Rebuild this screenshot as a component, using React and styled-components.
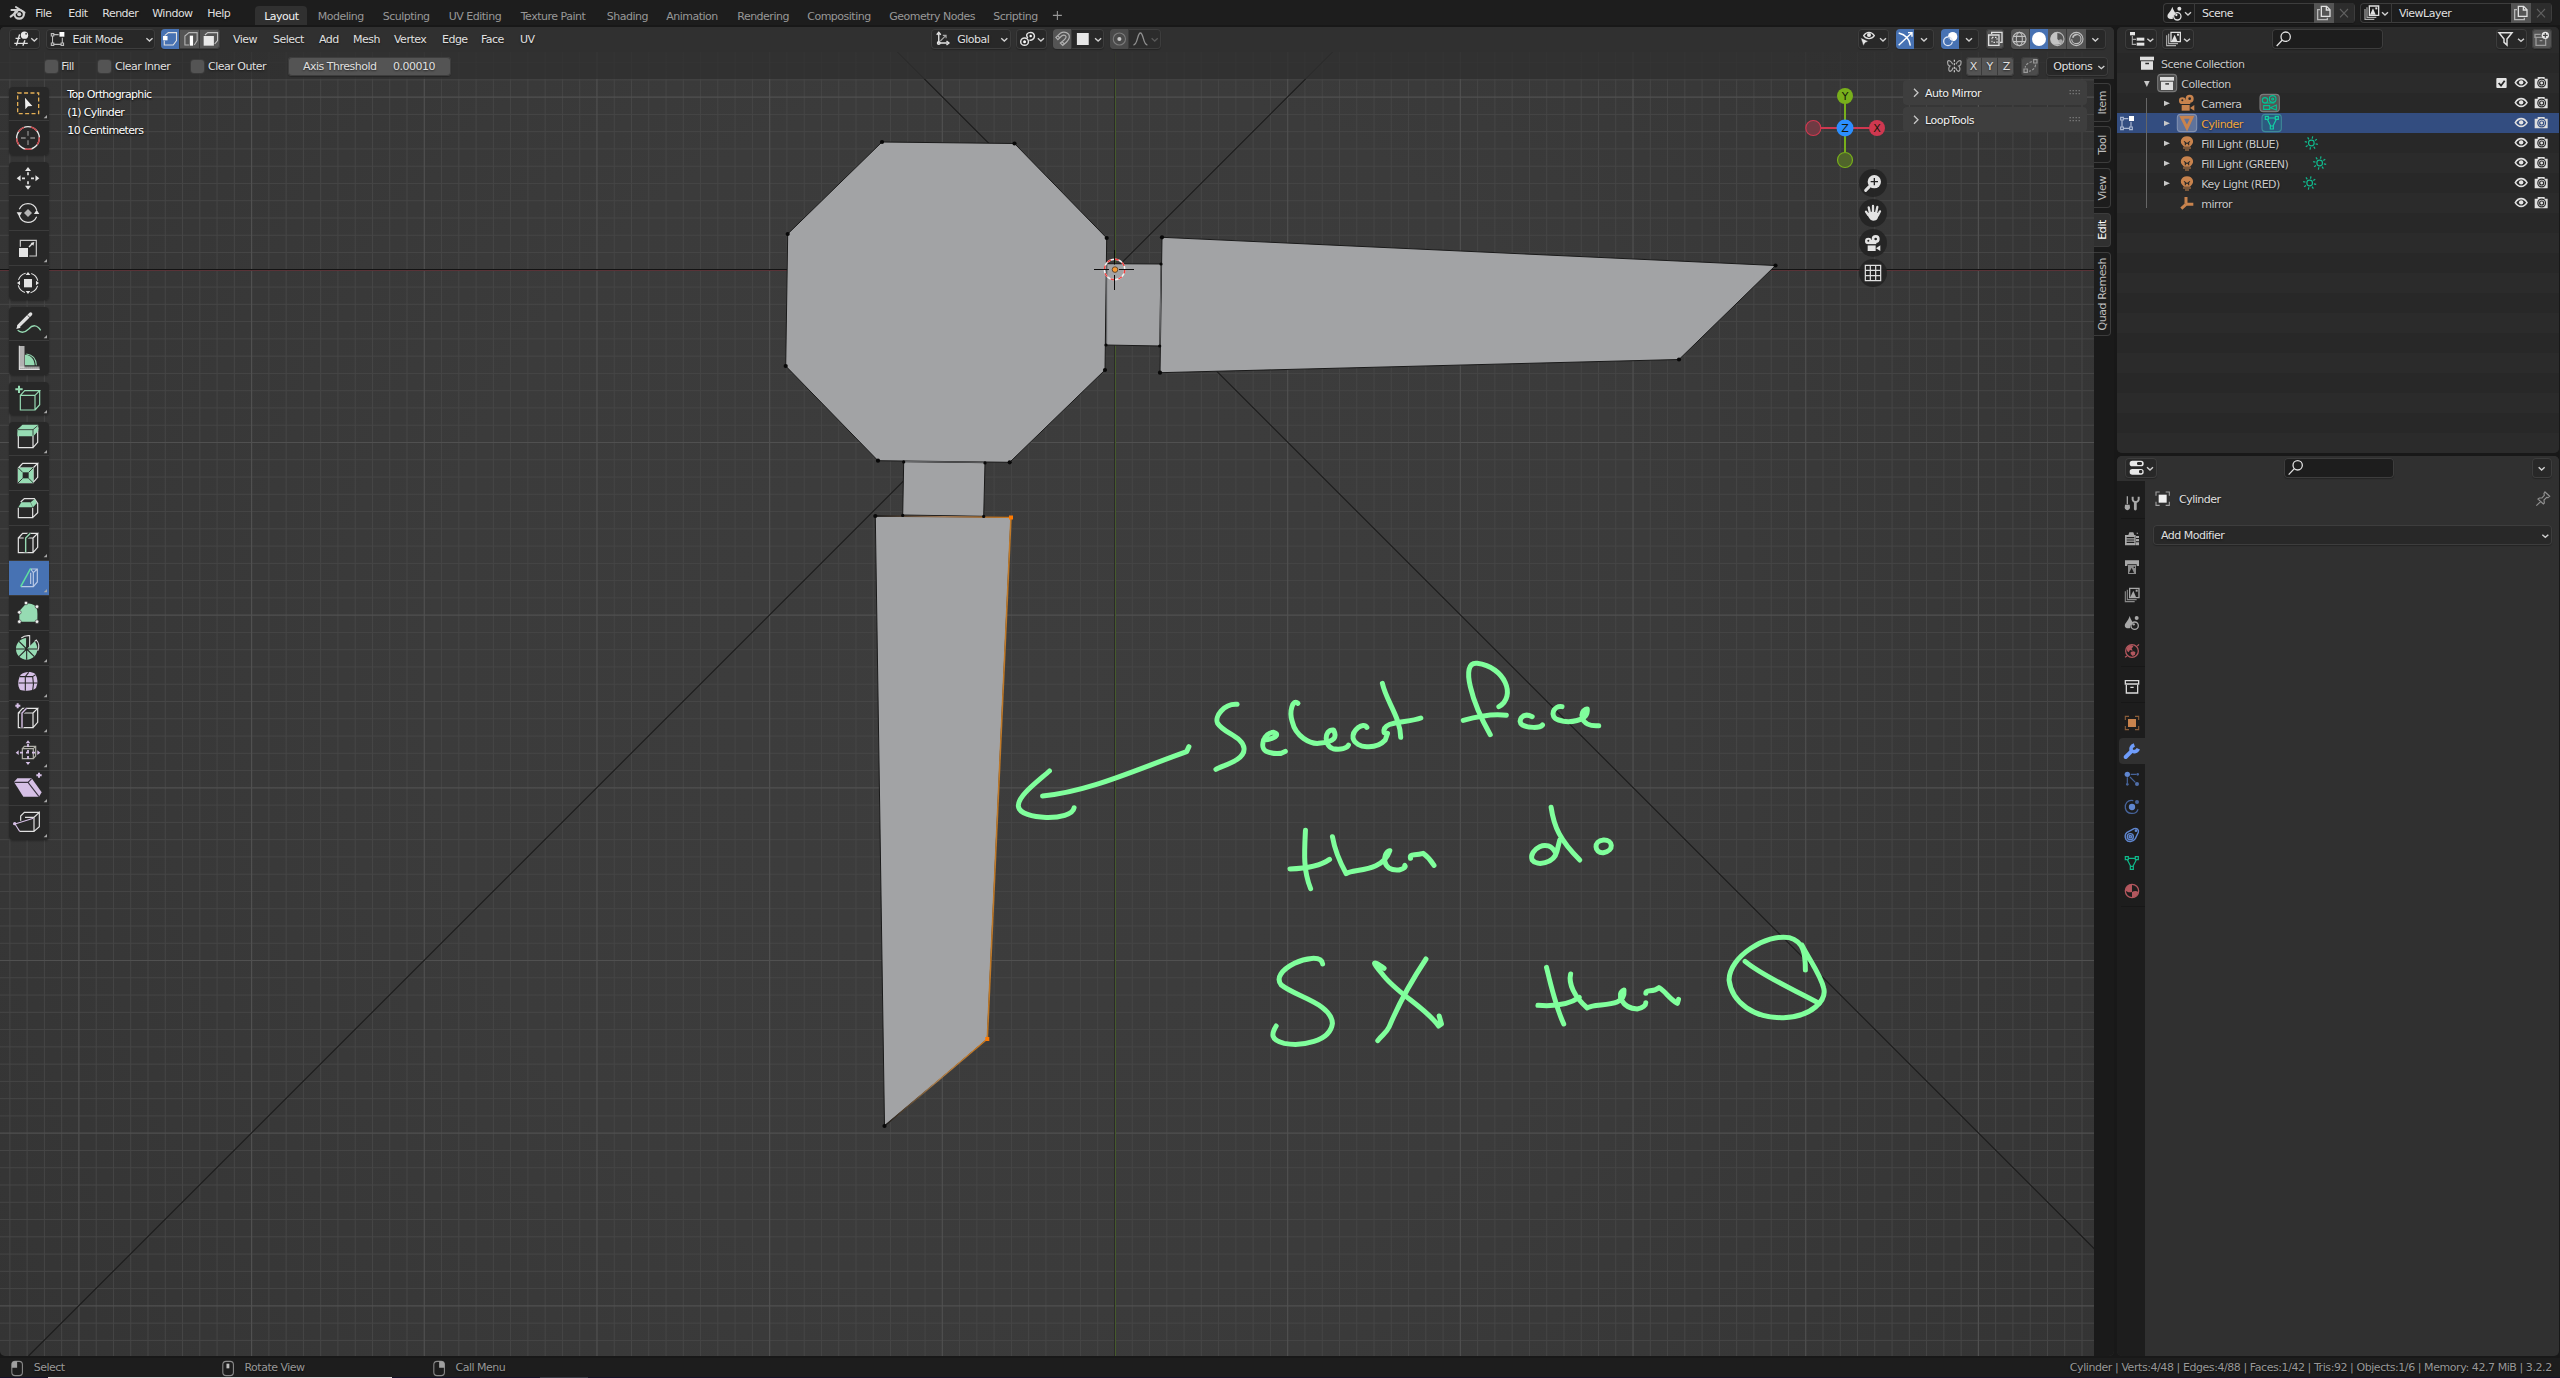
import React from "react";
import styled, { createGlobalStyle } from "styled-components";

const Global = createGlobalStyle`
  * { box-sizing: border-box; }
  html, body { margin: 0; background: #181818; overflow: hidden; }
  body { font-family: "DejaVu Sans", sans-serif; font-size: 11px; letter-spacing: -0.5px; color: #e5e5e5; }
`;

const Page = styled.div`
  width: 2560px; height: 1378px; display: flex; flex-direction: column; overflow: hidden;
`;

/* ---------- shared parts ---------- */
const Text = styled.span`
  display: block; flex: none; white-space: nowrap; line-height: 18px; box-sizing: content-box;
  padding-top: ${(p) => (p.$pt !== undefined ? p.$pt : 2)}px;
  width: ${(p) => (p.$w ? p.$w + "px" : "auto")};
  margin-left: ${(p) => p.$ml || 0}px;
  color: ${(p) => p.$c || "#e0e0e0"};
  letter-spacing: ${(p) => (p.$ls !== undefined ? p.$ls : -0.5)}px;
  text-shadow: 0 1px 2px rgba(0,0,0,.6);
`;
const Svg = styled.svg`
  display: block; flex: none; overflow: visible;
  fill: none; stroke: ${(p) => p.$c || "#e0e0e0"}; stroke-width: 1.1px;
  & * { vector-effect: non-scaling-stroke; }
`;
/* Icons are drawn on a fine grid: sx units per pixel across, 3 per pixel down. */
function Ico({ box, sx = 3, c, children }) {
  const [x, y, w, h] = box;
  return (
    <Svg width={w / sx} height={h / 3} viewBox={`${x} ${y} ${w} ${h}`} preserveAspectRatio="none" $c={c}>
      {children}
    </Svg>
  );
}
const NX = 1568 / 640;
const Chev = ({ x, y = 119, k = 1, c = "#d0d0d0" }) => (
  <path d={`M${x - 7.5 * k} ${y - 4}L${x} ${y + 4}L${x + 7.5 * k} ${y - 4}`} stroke={c} strokeWidth="1.4" />
);
const Box = styled.div`
  flex: none; display: flex; align-items: center; overflow: hidden;
  width: ${(p) => p.$w}px; height: ${(p) => p.$h || 20}px; margin-left: ${(p) => p.$ml || 0}px;
  background: ${(p) => p.$bg || "#282828"}; border-radius: 4px;
  box-shadow: inset 0 0 0 1px #3d3d3d, 0 1px 1px rgba(0,0,0,.25);
  justify-content: ${(p) => p.$j || "flex-start"};
`;
const Cell = styled.div`
  flex: none; display: flex; align-items: center; justify-content: center; height: 100%;
  width: ${(p) => p.$w}px; background: ${(p) => p.$bg || "transparent"};
  border-right: ${(p) => (p.$div ? "1px solid #3a3a3a" : "none")};
`;
const Fill = styled.div`flex: 1;`;
const Gap = styled.div`flex: none; width: ${(p) => p.$w || 0}px; height: ${(p) => p.$h || 0}px;`;

/* ---------- top bar ---------- */
const TopBar = styled.div`
  height: 25px; background: #1d1d1d; display: flex; align-items: flex-start; padding-left: 9px; flex: none;
`;
const Logo = styled.div`margin-top: 5px; flex: none;`;
const MenuText = styled(Text)`line-height: 26px; padding-top: 1px;`;
const Tabs = styled.div`display: flex; margin-top: 6px; height: 19px; margin-left: 10px;`;
const Tab = styled.div`
  width: ${(p) => p.$w}px; padding-left: 9px; margin-right: 2px; line-height: 22px; white-space: nowrap; border-radius: 4px 4px 0 0;
  background: ${(p) => (p.$on ? "#303030" : "transparent")};
  color: ${(p) => (p.$on ? "#f2f2f2" : "#989898")};
`;
const IdBox = styled(Box)`margin-top: 3px; background: #1d1d1d;`;

const tabs = [
  ["Layout", 51.5], ["Modeling", 63], ["Sculpting", 64], ["UV Editing", 70], ["Texture Paint", 84], ["Shading", 57.5],
  ["Animation", 69], ["Rendering", 68], ["Compositing", 80], ["Geometry Nodes", 102], ["Scripting", 62],
];

const Pages = ({ x }) => (
  <g strokeWidth="1.3">
    <path d={`M${x + 10} 19H${x + 26}L${x + 36} 29V49H${x + 10}Z`} />
    <path d={`M${x + 25} 19V30H${x + 36}`} />
    <path d={`M${x + 6} 29H${x - 1}V59H${x + 28}V53`} stroke="#b8b8b8" />
  </g>
);

const Mountain = ({ x, y, c = "#e0e0e0", d = "#b0b0b0" }) => (
  <g>
    <path d={`M${x} ${y + 10}V${y + 41}H${x + 28}`} stroke={d} />
    <path d={`M${x + 6} ${y + 5}V${y + 35}H${x + 34}`} stroke={d} />
    <rect x={x + 13} y={y + 1} width="28" height="28" stroke={c} strokeWidth="1.3" />
    <path d={`M${x + 15} ${y + 27}L${x + 24} ${y + 8}L${x + 32} ${y + 27}Z`} fill={c} stroke="none" />
    <rect x={x + 31} y={y + 5} width="6" height="6" fill={c} stroke="none" />
  </g>
);
const Drops = ({ x, y, c }) => (
  <g fill={c} stroke="none">
    <path d={`M${x + 15} ${y}C${x + 19} ${y + 14} ${x + 26} ${y + 18} ${x + 24} ${y + 23}C${x + 16} ${y + 26} ${x + 16} ${y + 32} ${x + 17} ${y + 36}C${x - 2} ${y + 40} ${x - 2} ${y + 26} ${x + 4} ${y + 20}C${x + 9} ${y + 13} ${x + 13} ${y + 8} ${x + 15} ${y}Z`} />
    <circle cx={x + 36} cy={y + 6} r="6" />
    <circle cx={x + 30} cy={y + 29} r="11" stroke={c} strokeWidth="1.3" fill="none" />
    <circle cx={x + 27} cy={y + 25} r="3.5" />
  </g>
);

function TopBarView() {
  return (
    <TopBar>
      <Logo>
        <Ico box={[22, 15, 41, 48]} sx={NX}>
          <path d="M39 21L60 38M28 30H50M26 50L42 35" strokeWidth="2" stroke="#cfcfcf" strokeLinecap="round" />
          <ellipse cx="47" cy="43" rx="11.5" ry="13" strokeWidth="2.2" stroke="#cfcfcf" />
          <ellipse cx="47" cy="43" rx="5" ry="6" fill="#cfcfcf" stroke="none" />
        </Ico>
      </Logo>
      <MenuText $ml={9.5} $w={33}>File</MenuText>
      <MenuText $w={34}>Edit</MenuText>
      <MenuText $w={50}>Render</MenuText>
      <MenuText $w={55}>Window</MenuText>
      <MenuText $w={38}>Help</MenuText>
      <Tabs>
        {tabs.map(([t, w], i) => <Tab key={t} $w={w} $on={i === 0}>{t}</Tab>)}
        <Ico box={[1000, 18, 36, 57]} sx={NX} c="#989898"><path d="M1012 46H1034M1023 33V60" /></Ico>
      </Tabs>
      <Fill />
      <IdBox $w={191.5}>
        <Cell $w={31.5} $div>
          <Ico box={[160, 9, 94, 60]}><Drops x={173} y={20} c="#e0e0e0" /><Chev x={235} y={41} k={1.2} /></Ico>
        </Cell>
        <Text $ml={7.5} $w={112}>Scene</Text>
        <Cell $w={20} $bg="#545454"><Ico box={[615, 9, 60, 60]}><Pages x={627} /></Ico></Cell>
        <Cell $w={20} $bg="#2c2c2c"><Ico box={[675, 9, 60, 60]} c="#606060"><path d="M693 27L717 52M717 27L693 52" /></Ico></Cell>
      </IdBox>
      <IdBox $w={191.5} $ml={5.5}>
        <Cell $w={31.5} $div>
          <Ico box={[751, 9, 94, 60]}><Mountain x={766} y={17} /><Chev x={826} y={41} k={1.2} /></Ico>
        </Cell>
        <Text $ml={7.5} $w={112}>ViewLayer</Text>
        <Cell $w={20} $bg="#545454"><Ico box={[615, 9, 60, 60]}><Pages x={627} /></Ico></Cell>
        <Cell $w={20} $bg="#2c2c2c"><Ico box={[675, 9, 60, 60]} c="#606060"><path d="M693 27L717 52M717 27L693 52" /></Ico></Cell>
      </IdBox>
      <Gap $w={8.5} />
    </TopBar>
  );
}

/* ---------- viewport drawing ---------- */
const Scene = styled.svg`position: absolute; left: 0; top: 0; display: block;`;
const S = 172.68, OX = 1115, OY = 269.8;

function Grid() {
  const minor = [], major = [];
  for (let i = -70; i <= 60; i++) {
    const x = OX + (i * S) / 10;
    if (x > 0 && x < 2094 && i !== 0) (i % 10 === 0 ? major : minor).push(`M${x.toFixed(2)} 27V1356`);
  }
  for (let i = -14; i <= 63; i++) {
    const y = OY + (i * S) / 10;
    if (y > 27 && y < 1356 && i !== 0) (i % 10 === 0 ? major : minor).push(`M0 ${y.toFixed(2)}H2094`);
  }
  return (
    <g fill="none">
      <path d={minor.join("")} stroke="#464646" strokeWidth="1" />
      <path d={major.join("")} stroke="#505050" strokeWidth="1.2" />
      <path d="M0 270.5H2094" stroke="#5a3237" />
      <path d="M0 269.5H2094" stroke="#131313" />
      <path d="M1115.5 27V1356" stroke="#465a2c" />
      <path d="M1114.5 27V1356" stroke="#2a2a2a" />
    </g>
  );
}

const verts = [
  [882, 142], [1014.5, 143.5], [1106.7, 238], [1105, 370], [1009.7, 462.3], [878, 460.7], [785.7, 366], [787.7, 234],
  [1162, 237.3], [1775.5, 265.5], [1679, 359.5], [1160, 372.7], [875.3, 516], [884.5, 1126],
];
const smallVerts = [[1161, 264], [1159.7, 346], [1106, 345], [903.7, 461.9], [985, 462.9], [983.7, 516.4], [902.7, 515.4]];

function Mesh() {
  return (
    <g fill="#a2a3a5" stroke="#1a1a1a" strokeWidth="1">
      <polygon points="1106.7,263.7 1161,264 1159.7,346 1106,345" />
      <polygon points="903.7,461.7 985,462.7 983.7,516.3 902.7,515" />
      <polygon points={verts.slice(0, 8).join(" ")} />
      <polygon points={verts.slice(8, 12).join(" ")} />
      <polygon points="875.3,516 1011,517.3 987.3,1039 884.5,1126" />
      <path d="M1106.7 264V344M1161 265L1160 345M905 461.500L984 462.300" stroke="#6b6c6e" />
      <path d="M875.3 516L1011 517.3" stroke="url(#topEdge)" strokeWidth="1.3" />
      <path d="M884.5 1126L987.3 1039" stroke="url(#lowEdge)" strokeWidth="1.3" />
      <path d="M1011 517.3L987.3 1039" stroke="#c07a2a" strokeWidth="1.6" />
      <g fill="#080808" stroke="none">
        {verts.map(([x, y]) => <circle key={x} cx={x} cy={y} r="2.1" />)}
        {smallVerts.map(([x, y]) => <circle key={x} cx={x} cy={y} r="1.6" />)}
      </g>
      <g fill="#ff7a00" stroke="none">
        <rect x="1009" y="515.5" width="4" height="4" />
        <rect x="985.3" y="1037" width="4" height="4" />
      </g>
    </g>
  );
}

function Cursor3D() {
  return (
    <g fill="none">
      <circle cx="1114.6" cy="269.5" r="10.2" stroke="#f2f2f2" strokeWidth="1.4" />
      <circle cx="1114.6" cy="269.5" r="10.2" stroke="#f04040" strokeWidth="1.4" strokeDasharray="4 4" />
      <path d="M1094 269.5H1109M1119 269.5H1134M1114.5 250V264.5M1114.5 275V290" stroke="#0c0c0c" />
      <circle cx="1115" cy="269.6" r="2.8" fill="#f79a35" stroke="#4a3520" strokeWidth=".8" />
    </g>
  );
}

const ink = [
  "M121 393C100 425 64 470 67 500C70 540 160 545 164 503",
  "M109 468C190 455 270 390 360 335L364 320",
  "M448 193C425 190 408 230 414 250C425 280 458 290 460 325C462 360 425 375 411 388",
  "M494 300C520 295 520 280 512 277C495 275 485 325 500 335C512 342 525 342 532 334",
  "M554 190C545 175 538 215 544 245C550 290 575 312 590 310C620 305 622 290 616 270C598 268 600 320 615 326C628 330 640 325 642 315",
  "M674 262C668 245 648 270 650 295C655 325 690 330 706 300L710 280",
  "M701 130C708 185 732 230 733 292",
  "M704 278C700 240 745 250 768 234",
  "M904 200C935 170 915 80 866 70C835 65 858 190 889 284",
  "M842 241C865 230 895 220 917 226",
  "M962 230C945 215 935 245 945 255C955 264 975 265 980 255",
  "M1014 200C1000 195 990 230 1008 240C1025 250 1060 245 1058 207C1042 212 1045 262 1078 257",
  "M567 571C565 640 563 690 576 746",
  "M540 687C570 685 595 675 609 658",
  "M614 590C618 630 628 670 638 701C650 685 700 700 714 632C700 640 700 695 730 690C740 685 742 680 740 676",
  "M750 655C748 640 755 648 772 640C780 650 785 660 791 676",
  "M995 502C1000 560 1010 600 1045 660",
  "M1003 640C990 590 955 630 962 660C970 680 1000 670 1005 635L1010 600",
  "M1086 600C1068 602 1070 640 1086 638C1106 632 1103 598 1086 600",
  "M597 972C595 945 565 955 548 970C525 990 515 1015 525 1035C550 1070 612 1090 614 1150C610 1205 560 1220 530 1210C505 1200 508 1180 516 1158",
  "M704 985C680 955 685 970 700 1000C725 1060 775 1100 799 1158L804 1152L800 1128",
  "M777 957C745 1040 725 1110 713 1160C708 1180 700 1185 693 1202",
  "M987 982C995 1040 1003 1100 1017 1152",
  "M972 1096C1005 1100 1030 1090 1044 1072",
  "M1029 1002C1025 1030 1035 1070 1058 1104C1070 1085 1125 1110 1122 1050C1108 1060 1118 1105 1145 1107C1155 1105 1160 1095 1160 1088",
  "M1160 1060C1160 1045 1172 1060 1183 1043C1195 1055 1200 1075 1215 1090L1217 1078",
  "M1438 990C1438 940 1435 905 1410 893C1370 880 1305 950 1305 1020C1310 1090 1350 1135 1400 1133C1450 1130 1475 1080 1470 1045C1465 1005 1445 960 1432 915",
  "M1333 964C1365 1010 1420 1050 1462 1090",
];

function SceneView() {
  return (
    <Scene width="2114" height="1329" viewBox="0 27 2114 1329">
      <defs>
        <radialGradient id="bg" gradientUnits="userSpaceOnUse" cx="1050" cy="690" r="1240">
          <stop offset="0" stopColor="#3d3d3d" /><stop offset=".5" stopColor="#3b3b3b" /><stop offset="1" stopColor="#343434" />
        </radialGradient>
        <linearGradient id="topEdge"><stop offset="0" stopColor="#1a1a1a" /><stop offset=".5" stopColor="#a27a55" /><stop offset="1" stopColor="#d07a1a" /></linearGradient>
        <linearGradient id="lowEdge"><stop offset="0" stopColor="#1a1a1a" /><stop offset=".5" stopColor="#b0824f" /><stop offset="1" stopColor="#d07a1a" /></linearGradient>
      </defs>
      <rect x="0" y="27" width="2114" height="1329" fill="url(#bg)" />
      <Grid />
      <path d="M872.5 27L2095 1249.5M1357.5 27L28.5 1356" stroke="#1b1b1b" strokeWidth="1.1" fill="none" />
      <Mesh />
      <Cursor3D />
      <g transform={`translate(980 640) scale(${900 / 1568} ${1 / 3})`} fill="none" stroke="#80ff9c" strokeWidth="5" strokeLinecap="round" strokeLinejoin="round">
        {ink.map((d) => <path key={d} d={d} vectorEffect="non-scaling-stroke" />)}
      </g>
    </Scene>
  );
}

/* ---------- viewport chrome ---------- */
const Main = styled.div`display: flex; height: 1329px; margin-top: 2px; gap: 3px; flex: none; padding-right: 1px;`;
const Viewport = styled.div`
  position: relative; width: 2114px; height: 1329px; flex: none; overflow: hidden; border-radius: 5px; background: #1a1a1a;
  display: flex; flex-direction: column;
`;
const Header = styled.div`
  position: relative; height: 25px; flex: none; background: #303030; display: flex; align-items: flex-start; padding: 2px 8px 0 9px;
`;
const ToolHeader = styled.div`
  position: relative; height: 27px; flex: none; background: rgba(48,48,48,.8); display: flex; align-items: center; padding: 2px 6.5px 0 44.5px;
`;
const TText = styled(Text)`padding-top: 1px;`;
const Body = styled.div`position: relative; flex: 1; display: flex; align-items: flex-start;`;
const HText = styled(Text)`line-height: 20px; padding-top: 1px;`;
const Check = styled.div`
  width: 13px; height: 13px; border-radius: 3px; background: #545454; box-shadow: 0 0 0 1px #3a3a3a; flex: none;
`;
const menus = [["View", 40], ["Select", 46], ["Add", 34], ["Mesh", 41], ["Vertex", 48], ["Edge", 39], ["Face", 39], ["UV", 16]];
const GREY = "#545454", BLUE = "#4772b3";

function ViewHeader() {
  return (
    <Header>
      <Box $w={31.4}>
        <Ico box={[22, 87, 77, 60]} sx={NX}>
          <path d="M38 115H50M35 130H68M48 103L40 137M61 121L56 137" strokeWidth="1.4" />
          <ellipse cx="60" cy="105.5" rx="9" ry="11" fill="#e8e8e8" stroke="none" />
          <ellipse cx="64" cy="101" rx="2.5" ry="3" fill="#555" stroke="none" />
          <Chev x={84} />
        </Ico>
      </Box>
      <Box $w={109.4} $ml={5.6}>
        <Ico box={[113, 87, 60, 60]} sx={NX} c="#bdbdbd">
          <path d="M126 101H132V108H126ZM126 129H132V136H126ZM150 129H156V136H150ZM133 104H144M129 109V128M133 133H149M153 113V128" />
          <rect x="146" y="96" width="12" height="14" fill="#fff" stroke="none" />
        </Ico>
        <Text $ml={2} $w={72.5}>Edit Mode</Text>
        <Ico box={[355, 87, 22, 60]} sx={NX}><Chev x={366} /></Ico>
      </Box>
      <Box $w={58.8} $ml={6.1} $bg={GREY}>
        <Cell $w={18.8} $bg={BLUE} $div><Ico box={[396, 87, 46, 60]} sx={NX}>
          <path d="M405 107L414 98H434V122L426 135H404V122" /><rect x="401" y="108" width="11" height="13" fill="#fff" stroke="none" />
        </Ico></Cell>
        <Cell $w={20.2} $div><Ico box={[442, 87, 49, 60]} sx={NX} c="#b5b5b5">
          <path d="M464 135H454V108L464 98H484V122L477 135" /><rect x="466" y="107" width="8" height="30" fill="#fff" stroke="none" />
        </Ico></Cell>
        <Cell $w={19.8}><Ico box={[491, 87, 49, 60]} sx={NX} c="#c5c5c5">
          <path d="M503 105L510 98H534V122L527 132" /><rect x="500" y="108" width="25" height="29" fill="#e8e8e8" stroke="none" />
        </Ico></Cell>
      </Box>
      <Gap $w={12.7} />
      {menus.map(([m, w]) => <HText key={m} $w={w}>{m}</HText>)}
      <Gap $w={395.4} />
      <Box $w={79.2}>
        <Ico box={[714, 87, 56, 60]} sx={NX}>
          <path d="M733 101V129H754M728 104L733 97L738 104M752 123L758 129L752 135" strokeWidth="1.4" />
          <path d="M737 123L750 107M743 106H751V115" stroke="#a8a8a8" />
          <ellipse cx="733" cy="129" rx="3.5" ry="4" />
        </Ico>
        <Text $ml={3} $w={41.5}>Global</Text>
        <Ico box={[880, 87, 24, 60]} sx={NX}><Chev x={893} /></Ico>
      </Box>
      <Box $w={31.1} $ml={5.7}>
        <Ico box={[922, 87, 76, 60]} sx={NX}>
          <ellipse cx="943" cy="125" rx="9.5" ry="11" strokeWidth="1.5" /><ellipse cx="943" cy="125" rx="3.5" ry="4.5" fill="#fff" stroke="none" />
          <path d="M951 114C944 104 951 97 958 97C968 98 970 112 963 118C960 121 957 121 955 120" strokeWidth="1.4" />
          <ellipse cx="958" cy="108" rx="3" ry="4" fill="#fff" stroke="none" /><Chev x={983} />
        </Ico>
      </Box>
      <Box $w={51} $ml={6.1}>
        <Cell $w={19} $bg={GREY} $div><Ico box={[1013, 87, 46, 60]} sx={NX} c="#b0b0b0">
          <path d="M1020 112L1031 100C1040 92 1054 98 1053 112C1052 122 1044 128 1037 136L1031 129C1038 122 1046 116 1045 110C1043 103 1037 105 1034 108L1025 119ZM1024 107L1030 114M1035 125L1041 132" strokeWidth="1.2" />
        </Ico></Cell>
        <Ico box={[1059, 87, 79, 60]} sx={NX}><rect x="1071" y="99" width="29" height="36" fill="#e6e6e6" stroke="none" /><Chev x={1123} /></Ico>
      </Box>
      <Box $w={51.4} $ml={5.7} $bg="#2c2c2c">
        <Cell $w={19} $bg="#4a4a4a" $div><Ico box={[1152, 87, 47, 60]} sx={NX} c="#7a7a7a">
          <ellipse cx="1175" cy="117" rx="15" ry="18" /><ellipse cx="1175" cy="117" rx="5" ry="6" fill="#c8c8c8" stroke="none" />
        </Ico></Cell>
        <Ico box={[1199, 87, 79, 60]} sx={NX} c="#909090">
          <path d="M1210 135C1221 134 1219 99 1227 99C1235 99 1233 134 1244 135" strokeWidth="1.3" /><Chev x={1262} c="#585858" />
        </Ico>
      </Box>
      <Fill />
      <Box $w={31}>
        <Ico box={[205, 87, 93, 60]}>
          <path d="M222 107C230 94 246 94 254 107C246 119 230 119 222 107Z" strokeWidth="1.3" /><circle cx="238" cy="105" r="6" fill="#e6e6e6" stroke="none" />
          <path d="M213 113L236 124L227 128L221 137Z" fill="#e6e6e6" stroke="#282828" strokeWidth=".5" /><Chev x={280} k={1.2} />
        </Ico>
      </Box>
      <Box $w={38.6} $ml={6.4}>
        <Cell $w={18.6} $bg={BLUE}><Ico box={[317, 87, 56, 60]}>
          <path d="M325 99C345 104 358 118 360 137M325 136L364 99M353 98H365V110" strokeWidth="1.4" stroke="#fff" />
        </Ico></Cell>
        <Ico box={[373, 87, 60, 60]}><Chev x={403} k={1.2} /></Ico>
      </Box>
      <Box $w={38.6} $ml={6.4}>
        <Cell $w={18.6} $bg={BLUE}><Ico box={[452, 87, 56, 60]}>
          <circle cx="487" cy="110" r="14" fill="#fff" stroke="none" /><circle cx="473" cy="124" r="13" stroke="#dfe7f5" strokeWidth="1.3" />
          <path d="M475 112C476 118 480 123 487 124" stroke="#4772b3" />
        </Ico></Cell>
        <Ico box={[508, 87, 60, 60]}><Chev x={538} k={1.2} /></Ico>
      </Box>
      <Box $w={18.6} $ml={6.4} $bg={GREY} $j="center">
        <Ico box={[587, 87, 56, 60]}>
          <rect x="595" y="105" width="31" height="31" strokeWidth="1.3" /><path d="M604 102V97H635V127H629" strokeWidth="1.3" /><rect x="605" y="112" width="15" height="15" strokeDasharray="1.5 1.5" />
        </Ico>
      </Box>
      <Box $w={95.3} $ml={6.4}>
        <Cell $w={19} $bg={GREY} $div><Ico box={[662, 87, 57, 60]} c="#c0c0c0">
          <circle cx="690" cy="117" r="20" /><ellipse cx="690" cy="117" rx="9" ry="20" /><path d="M672 109H708M672 125H708" />
        </Ico></Cell>
        <Cell $w={18.5} $bg={BLUE}><Ico box={[720, 87, 55, 60]}><circle cx="747" cy="117" r="21" fill="#fff" stroke="none" /></Ico></Cell>
        <Cell $w={19} $bg={GREY} $div><Ico box={[776, 87, 57, 60]} c="#b8b8b8">
          <circle cx="804" cy="117" r="20" /><path d="M804 97V117L817 130C801 140 784 132 784 117C784 106 792 97 804 97Z" fill="#c4c4c4" stroke="none" /><circle cx="814" cy="124" r="6" fill="#a8a8a8" stroke="none" />
        </Ico></Cell>
        <Cell $w={19} $bg={GREY}><Ico box={[833, 87, 57, 60]} c="#c0c0c0">
          <circle cx="861" cy="117" r="20" /><circle cx="861" cy="117" r="14" strokeDasharray="14 6" /><path d="M850 113C852 107 857 104 862 104" strokeWidth="1.6" />
        </Ico></Cell>
        <Ico box={[890, 87, 58, 60]}><Chev x={918} k={1.2} /></Ico>
      </Box>
    </Header>
  );
}

function ToolSettings() {
  return (
    <ToolHeader>
      <Check /><TText $ml={3.7} $w={37}>Fill</TText>
      <Check /><TText $ml={3.8} $w={76}>Clear Inner</TText>
      <Check /><TText $ml={4} $w={80}>Clear Outer</TText>
      <Box $w={163} $h={19} $bg={GREY}>
        <TText $ml={15} $w={90}>Axis Threshold</TText><TText>0.00010</TText>
      </Box>
      <Fill />
      <Ico box={[468, 171, 58, 57]} c="#a8a8a8">
        <path d="M493 179V219" strokeDasharray="2 1.5" stroke="#e0e0e0" />
        <path d="M488 193C484 183 476 180 473 184C472 192 475 197 480 198C475 202 475 212 480 214C485 213 488 208 489 203M498 193C502 183 510 180 513 184C514 192 511 197 506 198C511 202 511 212 506 214C501 213 498 208 497 203" strokeWidth="1.2" />
      </Ico>
      <Box $w={48.6} $h={19} $bg={GREY}>
        <Cell $w={16.2} $div><TText>X</TText></Cell>
        <Cell $w={16.2} $div><TText>Y</TText></Cell>
        <Cell $w={16.2}><TText>Z</TText></Cell>
      </Box>
      <Box $w={18.6} $h={19} $ml={6.4} $bg="#4c4c4c">
        <Ico box={[692, 171, 56, 57]} c="#9a9a9a">
          <path d="M730 179H740V189H730ZM701 207H711V217H701Z" strokeWidth="1.2" /><path d="M725 185C712 188 704 196 705 203M736 194C734 206 726 212 716 214" strokeDasharray="2.5 1.5" />
        </Ico>
      </Box>
      <Box $w={61.8} $h={19} $ml={6.4}>
        <TText $ml={7.6} $w={43}>Options</TText><Ico box={[918, 171, 30, 57]}><Chev x={934} y={202} k={1.2} /></Ico>
      </Box>
    </ToolHeader>
  );
}

/* ---------- left toolbar ---------- */
const Toolbar = styled.div`display: flex; flex-direction: column; gap: 7px; margin: 8px 0 0 9px; width: 40px;`;
const ToolGroup = styled.div`
  display: flex; flex-direction: column; gap: 1px; background: #3b3b3b; border-radius: 4px; overflow: hidden; box-shadow: 0 1px 2px rgba(0,0,0,.3);
`;
const ToolBtn = styled.div`height: 34px; background: ${(p) => (p.$on ? "#4772b3" : "#282828")}; &:first-child { height: 33px; }`;

const G = "#96dbb3", W = "#e4e4e4", P = "#d6c0e6", D = "#282828";
const Cube = ({ x, y, c = W }) => (
  <path d={`M${x} ${y + 14}H${x + 44}V${y + 58}H${x}ZM${x} ${y + 14}L${x + 13} ${y}H${x + 58}L${x + 44} ${y + 14}M${x + 58} ${y}V${y + 42}L${x + 44} ${y + 58}`} stroke={c} strokeWidth="1.2" />
);
const Arrow4 = ({ x, y, r, c = W, s = 9 }) => (
  <path
    fill={c} stroke="none"
    d={`M${x} ${y - r}l${s} ${s * 1.3}h${-2 * s}ZM${x} ${y + r}l${s} ${-s * 1.3}h${-2 * s}ZM${x - r} ${y}l${s * 1.3} ${s}v${-2 * s}ZM${x + r} ${y}l${-s * 1.3} ${s}v${-2 * s}Z`}
  />
);
/* [group of [top of button on the icon grid, has corner mark, drawing, active]] */
const toolGroups = [
  [
    [20, 1, <g><rect x="53" y="38" width="63" height="62" stroke="#e3ae55" strokeWidth="1.3" strokeDasharray="4 2.4" /><path d="M75 52L97 77L84 78L76 87Z" fill="#f0f0f0" stroke="none" /></g>],
    [123, 0, <g><circle cx="84" cy="174" r="34" stroke="#e8e8e8" strokeWidth="1.3" /><circle cx="84" cy="174" r="34" stroke="#c8484c" strokeWidth="1.5" strokeDasharray="7 7" /><path d="M63 174H77M91 174H105M84 153V167M84 181V195" stroke="#8a8a8a" strokeWidth="1.3" /></g>],
  ],
  [
    [245, 0, <g><Arrow4 x={84} y={294} r={34} /><path d="M84 276V285M84 303V312M66 294H75M93 294H102" strokeWidth="1.7" /></g>],
    [348, 0, <g><path d="M58 388C64 374 76 371 84 371C96 371 106 379 110 390M110 410C104 423 93 427 84 427C72 427 62 419 58 408" strokeWidth="1.2" /><path d="M50 397H66L58 410ZM102 402H118L110 389Z" fill={W} stroke="none" /><path d="M84 387L96 399L84 411L72 399Z" fill="#b4b4b4" stroke="none" /></g>],
    [453, 1, <g><path d="M61 500V481H109V528H88" strokeWidth="1.2" stroke="#c8c8c8" /><rect x="57" y="504" width="27" height="27" fill={W} stroke="none" /><path d="M87 501L98 490" strokeWidth="1.4" /><path d="M103 486L100 497L92 489Z" fill={W} stroke="none" /></g>],
    [558, 0, <g><circle cx="84" cy="609" r="30" strokeDasharray="10 5.7" strokeDashoffset="-3" /><Arrow4 x={84} y={609} r={33} s={7} /><rect x="72" y="597" width="24" height="25" fill={W} stroke="none" /></g>],
  ],
  [
    [681, 1, <g><path d="M53 751C66 762 76 757 86 747C98 733 112 734 122 751" stroke={G} strokeWidth="1.3" /><path d="M57 737L92 702" strokeWidth="3.4" strokeLinecap="round" /><path d="M49 747L53 734L62 743Z" fill={W} stroke="none" /><path d="M82 705L90 713" stroke={D} strokeWidth=".8" /></g>],
    [784, 0, <g><path d="M75 825C94 826 103 839 104 857H75Z" fill={G} stroke="none" /><path d="M79 823C97 825 108 838 109 857" stroke={G} /><path d="M66 800V865" strokeWidth="5" stroke="#dedede" strokeDasharray="1.3 .7" /><path d="M58 865H119" strokeWidth="3" stroke="#dedede" strokeDasharray="1.3 .7" /><path d="M58 798V869H119" /></g>],
  ],
  [[906, 1, <g><Cube x={61} y={932} c={G} /><path d="M57 917V939M46 928H68" stroke={G} strokeWidth="2" /></g>]],
  [
    [1026, 1, <g><Cube x={55} y={1045} /><path d="M54 1049L68 1036H113V1052L99 1067H54Z" fill={G} stroke={G} /><path d="M54 1049H99L113 1037M99 1049V1067" stroke={D} strokeWidth=".8" /></g>],
    [1128, 0, <g><Cube x={55} y={1150} /><rect x="54" y="1163" width="46" height="46" fill={G} stroke="none" /><rect x="68" y="1177" width="18" height="18" fill={D} stroke="none" /><path d="M54 1163L68 1177M100 1163L86 1177M54 1209L68 1195M100 1209L86 1195" stroke={D} strokeWidth=".9" /></g>],
    [1233, 0, <g transform="translate(0 1200)"><path d="M55 83V113H98V83M98 113L113 98V70L103 56H73L62 66" strokeWidth="1.2" /><path d="M64 67H91L98 82H55ZM92 67L104 57L111 69L99 82Z" fill={G} stroke="none" /></g>],
    [1338, 1, <g transform="translate(0 1200)"><Cube x={55} y={160} /><path d="M77 217V174L91 160" stroke={D} strokeWidth="4" /><path d="M77 217V174L91 160" stroke={G} strokeWidth="1.4" /></g>],
    [1443, 1, <g transform="translate(0 1200)"><path d="M63 320H100L112 306V267H92M92 267L100 278V320M100 278L112 267M92 278V312" stroke="#b9c9e6" strokeWidth="1.2" /><path d="M62 320L92 265" stroke="#5fe0a0" strokeWidth="1.5" /></g>, 1],
    [1548, 0, <g transform="translate(0 1200)"><path d="M58 425V393L78 371C90 370 105 374 109 382C114 395 112 410 112 425Z" fill={G} stroke="none" /><g fill="#f0f0f0" stroke={D} strokeWidth=".6"><circle cx="78" cy="369" r="5.5" /><circle cx="111" cy="380" r="5.5" /><circle cx="58" cy="397" r="5.5" /><circle cx="58" cy="425" r="5.5" /><circle cx="111" cy="425" r="5.5" /></g></g>],
    [1653, 1, <g transform="translate(0 1200)"><path d="M80 507L80 474C62 474 48 489 48 507C48 525 62 539 80 539C98 539 112 525 112 507C112 498 108 490 104 484Z" fill={G} stroke="none" /><path d="M80 474V539M80 507H48M80 507H112M80 507L57 484M80 507L57 530M80 507L103 530" stroke={D} /><path d="M64 474C72 467 80 466 89 467V500M104 484L109 480C116 488 119 500 113 512" strokeWidth="1.1" /></g>],
    [1758, 1, <g transform="translate(0 1200)"><path d="M62 584C74 574 94 574 106 582C114 596 114 610 108 624C98 634 74 634 60 629C52 616 53 600 62 584Z" fill={P} stroke="none" /><path d="M56 609H111M76 590V632M60 590H98C101 604 101 618 98 631M98 590L107 584M76 590L86 577" stroke={D} /></g>],
    [1863, 1, <g transform="translate(0 1200)"><Cube x={55} y={685} /><path d="M66 743V699L80 685" stroke={D} strokeWidth="3.5" /><path d="M66 743V699L80 685" stroke={P} strokeWidth="1.4" /><path d="M53 670V685M46 677H61" stroke={P} strokeWidth="2" /></g>],
    [1968, 1, <g transform="translate(0 1200)"><path d="M67 806H100V836H67ZM67 806L73 799H107V828L100 836M100 806L107 799" strokeWidth="1.2" stroke="#b0b0a8" /><Arrow4 x={84} y={818} r={37} c={P} s={7} /><path d="M84 792V844M60 818H110" stroke={P} strokeWidth="1.8" strokeDasharray="3 3" /></g>],
    [2073, 1, <g transform="translate(0 1200)"><path d="M42 906L52 895H95L125 937L117 950H70Z" fill={P} stroke="none" /><path d="M43 907H84L95 896M84 907L117 950" stroke="#3a3340" /><path d="M117 878V893M109 886H125" stroke={P} strokeWidth="2" /></g>],
    [2178, 1, <g transform="translate(0 1200)"><path d="M59 1054H102V1012L118 997V1040L102 1054M118 997H73L62 1008V1022M102 1012H75" strokeWidth="1.2" /><path d="M45 1032L100 1015M45 1032L59 1054" stroke={P} /><circle cx="44" cy="1031" r="5" fill={P} stroke="none" /></g>],
  ],
];

/* ---------- viewport overlay ---------- */
const Info = styled.div`margin: 7px 0 0 18.3px; flex: 1;`;
const InfoLine = styled(Text)`padding-top: 0; color: #fff; letter-spacing: -0.65px; text-shadow: 0 1px 2px #000;`;
const NavColumn = styled.div`width: 86px; margin: 3px 12px 0 0; display: flex; flex-direction: column; align-items: flex-start;`;
const Ball = styled.div`
  width: 28px; height: 28px; border-radius: 50%; background: rgba(34,34,34,.85); margin: 0 0 2px 54px;
  display: flex; align-items: center; justify-content: center;
`;
const Panels = styled.div`width: 184px; display: flex; flex-direction: column; gap: 2px; margin: 1px 6.6px 0 0;`;
const Panel = styled.div`
  height: 25px; background: #3e3e3e; border-radius: 4px; display: flex; align-items: center; padding-right: 6px;
`;
const SideTabs = styled.div`
  width: 20px; align-self: stretch; background: #1a1a1a; padding: 4px 3px 0 0; display: flex; flex-direction: column; gap: 4.6px; flex: none;
`;
const SideTab = styled.div`
  height: ${(p) => p.$h}px; width: 17px; border: 1px solid #3c3c3c; border-left: none; border-radius: 0 4px 4px 0; flex: none;
  background: ${(p) => (p.$on ? "#303030" : "#1d1d1d")}; color: ${(p) => (p.$on ? "#fff" : "#bdbdbd")};
  display: flex; align-items: center; justify-content: center;
  & > span { writing-mode: vertical-rl; transform: rotate(180deg); white-space: nowrap; line-height: 15px; letter-spacing: -0.4px; }
`;

function Gizmo() {
  return (
    <Svg width="86" height="86" viewBox="1805 82 86 86" $c="none">
      <g strokeWidth="2"><path d="M1845 96V152" stroke="#78af1b" /><path d="M1821 128H1877" stroke="#cf3850" /></g>
      <circle cx="1813.3" cy="128" r="7.5" fill="#6f3a43" stroke="#cf3850" strokeWidth="1.2" />
      <circle cx="1845" cy="160" r="7.5" fill="#50652b" stroke="#78af1b" strokeWidth="1.2" />
      <circle cx="1845" cy="96" r="8" fill="#78af1b" /><circle cx="1877" cy="128" r="8" fill="#cf3850" /><circle cx="1845" cy="128" r="8.5" fill="#2c8fff" />
      <g stroke="none" fontSize="11" textAnchor="middle" fill="#14180a" letterSpacing="0">
        <text x="1845" y="100">Y</text><text x="1877" y="132">X</text><text x="1845" y="132">Z</text>
      </g>
    </Svg>
  );
}

const Dots = () => (
  <Ico box={[838, 268, 36, 20]} c="#8f8f8f"><path d="M840 273H872M840 282H872" strokeDasharray="1 2" /></Ico>
);

const MovieCam = ({ x, y, c = "#e4e4e4", h = "#282828" }) => (
  <g fill={c} stroke="none">
    <circle cx={x + 10} cy={y + 17} r="10" /><circle cx={x + 32} cy={y + 11} r="12" /><rect x={x + 8} y={y + 14} width="26" height="13" />
    <rect x={x + 8} y={y + 30} width="24" height="17" /><path d={`M${x + 33} ${y + 39}L${x + 46} ${y + 30}V${y + 47}Z`} />
    <circle cx={x + 10} cy={y + 16} r="3" fill={h} /><circle cx={x + 32} cy={y + 11} r="4" fill={h} /><rect x={x + 6} y={y + 27} width="40" height="2.5" fill={h} />
  </g>
);

function ViewportView() {
  return (
    <Viewport>
      <SceneView />
      <ViewHeader />
      <ToolSettings />
      <Body>
        <Toolbar>
          {toolGroups.map((g, i) => (
            <ToolGroup key={i}>
              {g.map(([top, mark, art, on], k) => (
                <ToolBtn key={k} $on={on}>
                  <Ico box={[27, top, 120, 102]}>{art}{mark ? <path d={`M141 ${top + 84}V${top + 94}H131Z`} fill="#a8a8a8" stroke="none" /> : null}</Ico>
                </ToolBtn>
              ))}
            </ToolGroup>
          ))}
        </Toolbar>
        <Info><InfoLine>Top Orthographic</InfoLine><InfoLine>(1) Cylinder</InfoLine><InfoLine>10 Centimeters</InfoLine></Info>
        <NavColumn>
          <Gizmo />
          <Gap $h={1} />
          <Ball><Ico box={[207, 507, 84, 84]}><circle cx="253" cy="545" r="20" fill="#e2e2e2" stroke="none" /><path d="M238 560L227 571" strokeWidth="3" strokeLinecap="round" /><path d="M253 534V556M242 545H264" stroke="#222" strokeWidth="1.3" /></Ico></Ball>
          <Ball><Ico box={[207, 597, 84, 84]}><path d="M234 644L228 635M240 640L236 622M249 638V618M258 640L262 621M264 646L270 634" strokeWidth="2.3" strokeLinecap="round" /><path d="M233 640C240 634 258 632 267 642C264 655 262 662 250 662C240 662 236 652 231 642Z" fill="#e2e2e2" stroke="none" /></Ico></Ball>
          <Ball><Ico box={[207, 687, 84, 84]}><MovieCam x={225} y={706} /></Ico></Ball>
          <Ball><Ico box={[207, 777, 84, 84]}><path d="M226 796H272V842H226ZM241 796V842M257 796V842M226 811H272M226 827H272" strokeWidth="1.2" /></Ico></Ball>
        </NavColumn>
        <Panels>
          {["Auto Mirror", "LoopTools"].map((t) => (
            <Panel key={t}>
              <Ico box={[340, 240, 65, 75]}><path d="M373 266L385 278L373 290" strokeWidth="1.3" stroke="#c8c8c8" /></Ico>
              <Text $c="#f0f0f0">{t}</Text><Fill /><Dots />
            </Panel>
          ))}
        </Panels>
        <SideTabs>
          <SideTab $h={38.5}><span>Item</span></SideTab>
          <SideTab $h={37}><span>Tool</span></SideTab>
          <SideTab $h={40.5}><span>View</span></SideTab>
          <SideTab $h={34.5} $on><span>Edit</span></SideTab>
          <SideTab $h={84.5}><span>Quad Remesh</span></SideTab>
        </SideTabs>
      </Body>
    </Viewport>
  );
}

/* ---------- outliner ---------- */
const Side = styled.div`width: 442px; display: flex; flex-direction: column; gap: 3px; flex: none;`;
const Outliner = styled.div`height: 426px; border-radius: 5px; overflow: hidden; background: #282828; flex: none;`;
const OHeader = styled(Header)`background: #2b2b2b; height: 26px; padding-right: 7px; padding-left: 8px;`;
const Row = styled.div`
  height: 20px; display: flex; align-items: center; padding: 0 6px 0 1px;
  background: ${(p) => (p.$on ? "#334d80" : p.$alt ? "#2b2b2b" : "#282828")};
`;
const Rows = styled.div`position: relative;`;
const TreeLine = styled.div`position: absolute; left: 29px; top: 45px; width: 1px; height: 110px; background: #666;`;

const CollIcon = ({ x, y }) => (
  <g fill="#dedede" stroke="none"><rect x={x} y={y} width="42" height="11" /><path d={`M${x + 3} ${y + 14}H${x + 39}V${y + 39}H${x + 3}ZM${x + 16} ${y + 18}V${y + 23}H${x + 27}V${y + 18}Z`} fillRule="evenodd" /></g>
);
const Tri = ({ x, y }) => <path d={`M${x} ${y - 8}L${x + 18} ${y}L${x} ${y + 8}Z`} fill="#c8c8c8" stroke="none" />;
const OR = "#c8834d", TEAL = "#00c293";
const Bulb = ({ y }) => (
  <g><path d={`M231 ${y - 21}C250 ${y - 21} 254 ${y - 2} 244 ${y + 6}L240 ${y + 10}H222L218 ${y + 6}C208 ${y - 2} 212 ${y - 21} 231 ${y - 21}Z`} fill={OR} stroke="none" />
    <path d={`M222 ${y - 6}L231 ${y + 1}L240 ${y - 6}M226 ${y - 2}V${y + 6}M236 ${y - 2}V${y + 6}`} stroke="#282828" />
    <path d={`M219 ${y + 14}H243M225 ${y + 20}H237`} stroke={OR} strokeWidth="1.2" /></g>
);
const MeshTri = ({ x, y, c }) => (
  <path d={`M${x} ${y}h9v9h-9ZM${x + 30} ${y}h9v9h-9ZM${x + 15} ${y + 29}h9v9h-9ZM${x + 9} ${y + 5}H${x + 30}M${x + 6} ${y + 9}L${x + 16} ${y + 29}M${x + 33} ${y + 9}L${x + 23} ${y + 29}`} stroke={c} strokeWidth="1.2" />
);
const Sun = ({ x, y }) => (
  <g stroke="#10b98d" strokeWidth="1.2"><circle cx={x} cy={y} r="8.5" />
    {[0, 1, 2, 3, 4, 5, 6, 7].map((i) => { const a = (i * Math.PI) / 4 + 0.2; return <path key={i} d={`M${x + 13 * Math.cos(a)} ${y + 13 * Math.sin(a)}L${x + 20 * Math.cos(a)} ${y + 20 * Math.sin(a)}`} />; })}</g>
);
const rows = [
  { t: "Camera", y: 312, tri: 1, art: <MovieCam x={207} y={285} c={OR} />, data: <g><rect x="451" y="283" width="58" height="52" rx="10" fill="#555" stroke="#7a7a7a" /><g stroke={TEAL}><circle cx="466" cy="301" r="8" /><circle cx="489" cy="297" r="10" /><path d="M462 309H494M462 317H480V328H462ZM482 323L500 315V330Z" /><circle cx="489" cy="297" r="3" /></g></g> },
  { t: "Cylinder", y: 372, tri: 1, on: 1, art: <g><rect x="202" y="343" width="58" height="52" rx="10" fill="#5f739c" stroke="#8190b0" /><path d="M215 352H246L231 384Z" stroke={OR} strokeWidth="3" fill="none" /></g>, data: <g><rect x="457" y="343" width="58" height="52" rx="10" fill="#2c5a80" stroke="#3f8a98" /><MeshTri x={467} y={349} c="#13d0a4" /></g> },
  { t: "Fill Light (BLUE)", y: 432, tri: 1, art: <Bulb y={430} />, data: <Sun x={605} y={429} /> },
  { t: "Fill Light (GREEN)", y: 492, tri: 1, art: <Bulb y={490} />, data: <Sun x={630} y={489} /> },
  { t: "Key Light (RED)", y: 552, tri: 1, art: <Bulb y={550} />, data: <Sun x={600} y={549} /> },
  { t: "mirror", y: 612, art: <path d="M228 591V611M228 613H250M228 613L214 626" stroke={OR} strokeWidth="3" />, data: null },
];
const Vis = ({ y, check, on }) => (
  <Ico box={[1150, y - 33, 180, 60]}>
    {check ? <g><rect x="1160" y={y - 18} width="31" height="30" rx="3" fill="#e4e4e4" stroke="none" /><path d={`M1167 ${y - 3}L1174 ${y + 5}L1185 ${y - 10}`} stroke="#282828" strokeWidth="1.8" /></g> : null}
    <path d={`M1217 ${y - 4}C1226 ${y - 20} 1243 ${y - 20} 1252 ${y - 4}C1243 ${y + 11} 1226 ${y + 11} 1217 ${y - 4}Z`} strokeWidth="1.6" />
    <circle cx="1234.5" cy={y - 5} r="6.5" fill="#e4e4e4" stroke="none" />
    <path d={`M1275 ${y - 16}H1284V${y - 21}H1305V${y - 16}H1314V${y + 13}H1275Z`} fill="#dedede" stroke="none" />
    <circle cx="1296" cy={y - 3} r="11.5" stroke={on ? "#334d80" : "#282828"} strokeWidth="1.2" /><circle cx="1296" cy={y - 3} r="6" stroke={on ? "#334d80" : "#282828"} strokeWidth="1.2" />
  </Ico>
);
const Magnify = ({ x, y }) => (
  <g strokeWidth="1.3"><circle cx={x + 27} cy={y + 14} r="14" /><path d={`M${x + 17} ${y + 24}L${x} ${y + 42}`} /></g>
);

function OutlinerView() {
  return (
    <Outliner>
      <OHeader>
        <Box $w={31.6}><Ico box={[45, 87, 95, 60]}>
          <rect x="60" y="96" width="15" height="10" fill="#e6e6e6" stroke="none" /><path d="M67 108V133H78M67 118H78" stroke="#a8a8a8" />
          <rect x="80" y="113" width="23" height="9" fill="#e6e6e6" stroke="none" /><rect x="80" y="128" width="23" height="9" fill="#e6e6e6" stroke="none" /><Chev x={121} y={120} k={1.2} />
        </Ico></Box>
        <Box $w={31.4} $ml={5.7}><Ico box={[157, 87, 94, 60]}><Mountain x={171} y={96} /><Chev x={232} y={120} k={1.2} /></Ico></Box>
        <Box $w={110.5} $ml={78.6} $bg="#1d1d1d"><Ico box={[487, 87, 60, 60]}><Magnify x={501} y={96} /></Ico></Box>
        <Fill />
        <Box $w={31.5}><Ico box={[1156, 87, 94, 60]}><path d="M1165 98H1204L1189 117V135L1180 127V117Z" strokeWidth="1.5" /><Chev x={1231} y={120} k={1.2} /></Ico></Box>
        <Box $w={19.6} $ml={5.4} $bg="#545454"><Ico box={[1267, 87, 59, 60]} c="#9c9c9c">
          <path d="M1293 103H1276V112H1310M1279 113V136H1308V117M1290 122H1298" strokeWidth="1.3" /><circle cx="1307" cy="106" r="11" fill="#e6e6e6" stroke="none" /><path d="M1307 99V113M1300 106H1314" stroke="#444" strokeWidth="1.2" />
        </Ico></Box>
      </OHeader>
      <Rows>
        <Row><Ico box={[24, 160, 129, 60]}><CollIcon x={90} y={171} /></Ico><Text $pt={4} $c="#c8c8c8">Scene Collection</Text></Row>
        <Row $alt>
          <Ico box={[24, 219, 190, 60]}><path d="M102 243H119L110.5 261Z" fill="#c8c8c8" stroke="none" /><rect x="143" y="223" width="57" height="52" rx="10" fill="#4e4e4e" stroke="#777" /><CollIcon x={150} y={231} /></Ico>
          <Text $pt={4} $c="#c8c8c8">Collection</Text><Fill /><Vis y={252} check />
        </Row>
        {rows.map((r, i) => (
          <Row key={r.t} $alt={i % 2 === 1} $on={r.on}>
            <Ico box={[24, r.y - 33, 250, 60]}>
              {r.on ? <g stroke="#a9b6d0"><path d="M32 352H40V360H32ZM32 381H40V389H32ZM59 381H67V389H59ZM41 356H55M36 361V380M41 385H58M63 365V380" strokeWidth="1.2" /><rect x="57" y="348" width="15" height="15" fill="#fff" stroke="none" /></g> : null}
              {r.tri ? <Tri x={162} y={r.y - 2} /> : null}{r.art}
            </Ico>
            <Text $pt={4} $c={r.on ? "#f0a73c" : "#c8c8c8"} $w={40}>{r.t}</Text>
            <Ico box={[394, r.y - 33, 300, 60]}>{r.data}</Ico>
            <Fill /><Vis y={r.y} on={r.on} />
          </Row>
        ))}
        {Array.from({ length: 12 }, (_, i) => <Row key={i} $alt={i % 2 === 1} />)}
        <TreeLine />
      </Rows>
    </Outliner>
  );
}

/* ---------- properties ---------- */
const Props = styled.div`flex: 1; border-radius: 5px; overflow: hidden; background: #303030; display: flex; flex-direction: column;`;
const PHeader = styled(Header)`padding-right: 7px; padding-left: 8px;`;
const PBody = styled.div`flex: 1; display: flex;`;
const Nav = styled.div`width: 28px; background: #1d1d1d; padding: 8.7px 0 0 2px; display: flex; flex-direction: column;`;
const NavTab = styled.div`
  height: 26px; margin-bottom: 2px; border-radius: 4px 0 0 4px; background: ${(p) => (p.$on ? "#303030" : "transparent")};
  margin-top: ${(p) => p.$mt || 0}px; flex: none;
`;
const NavLine = styled.div`height: 1px; background: #171717; margin: 0 0 -1px 2px; flex: none;`;
const Content = styled.div`flex: 1; display: flex; flex-direction: column; padding: 8px 7px 0 8px;`;
const Line = styled.div`display: flex; align-items: center; height: 20px; margin-bottom: 16px;`;

const N = "#a8a8a8", RD = "#b3575e", BL = "#5f86d0", BD = "#46639a";
const Brackets = ({ x, y, c, f }) => (
  <g><path d={`M${x} ${y + 11}V${y}H${x + 11}M${x + 29} ${y}H${x + 40}V${y + 11}M${x + 40} ${y + 29}V${y + 40}H${x + 29}M${x + 11} ${y + 40}H${x}V${y + 29}`} stroke={c} /><rect x={x + 8} y={y + 8} width="24" height="24" fill={f} stroke="none" /></g>
);
const navTabs = [
  [158, <g stroke={N}><path d="M142 138V162" strokeWidth="1.3" /><path d="M135 163H149L150 172C148 182 136 182 134 172Z" fill={N} stroke="none" /><path d="M166 158V176" strokeWidth="2.8" strokeLinecap="round" /><path d="M158 139V148C159 153 163 155 167 155C171 155 175 153 176 148V139" strokeWidth="2" /></g>],
  [266, <g fill={N} stroke="none"><path d="M135 254H145L148 246H160L163 254H167V285H135ZM168 257H177V263H168ZM168 266H177V273H168ZM168 276H177V285H168ZM170 247H174V250H170Z" /><path d="M140 262H163M140 269H163M140 276H163" stroke="#1d1d1d" /></g>, 1],
  [351, <g fill={N} stroke="none"><path d="M135 331H177V348H170V343H142V348H135Z" /><path d="M144 345H168V372H144Z" opacity=".8" /><path d="M147 369L155 353L162 369Z" fill="#1d1d1d" /><rect x="161" y="350" width="4" height="4" fill="#1d1d1d" /></g>],
  [435, <Mountain x={136} y={414} c={N} d="#8a8a8a" />],
  [519, <Drops x={134} y={498} c={N} />],
  [603, <g stroke={RD}><circle cx="156" cy="603" r="19" strokeWidth="1.3" /><path d="M143 590C150 584 158 585 160 590L155 595L158 602L150 600L146 607C139 603 139 596 143 590ZM160 604L166 606L165 614L158 618L152 612V606Z" fill={RD} stroke="none" /><path d="M135 622L141 618M172 588L177 583" strokeWidth="1.2" /></g>],
  [713, <path d="M136 694H176V704H136ZM139 707V731H173V707M151 714H161" stroke="#dcdcdc" strokeWidth="1.3" />, 1],
  [819, <Brackets x={136} y={799} c="#8a5c38" f={OR} />, 1],
  [903, <g stroke="#6f9dfb"><path d="M137 921L154 904" strokeWidth="4" strokeLinecap="round" /><path d="M163 885C152 889 152 896 154 901C158 907 170 907 175 896" strokeWidth="3.6" /></g>],
  [987, <g stroke={BD}><path d="M152 973H168M142 982V1000M150 981L166 997" strokeWidth="1.2" /><circle cx="142" cy="973" r="8" fill={BL} stroke="none" /><circle cx="173" cy="973" r="4" fill={BD} stroke="none" /><circle cx="142" cy="1003" r="4" fill={BD} stroke="none" /><circle cx="171" cy="1002" r="6" fill={BL} opacity=".8" stroke="none" /></g>],
  [1071, <g stroke={BD}><path d="M160 1052C142 1048 134 1062 136 1074C140 1094 168 1096 174 1078" strokeWidth="1.3" /><circle cx="156" cy="1071" r="9.5" fill={BL} stroke="none" /><circle cx="171" cy="1056" r="6" fill={BD} stroke="none" /></g>],
  [1155, <g stroke={BL} strokeWidth="1.4"><path d="M140 1148L162 1136C172 1133 177 1140 175 1147L166 1166C160 1176 144 1178 138 1168C135 1162 135 1153 140 1148Z" /><circle cx="151" cy="1160" r="9" /><circle cx="151" cy="1160" r="3.5" /><circle cx="168" cy="1142" r="2" /></g>],
  [1239, <MeshTri x={136} y={1220} c="#0fb88a" />],
  [1323, <g><circle cx="156" cy="1323" r="20" stroke={RD} strokeWidth="1.3" /><path d="M156 1303V1326C147 1328 140 1325 137 1322C138 1310 146 1304 156 1303ZM156 1326C163 1322 170 1322 175 1326C173 1336 166 1342 156 1343Z" fill={RD} stroke="none" /></g>],
];

function PropertiesView() {
  return (
    <Props>
      <PHeader>
        <Box $w={31.6}><Ico box={[136, 25, 94, 60]}>
          <rect x="150" y="33" width="42" height="17" rx="8" fill="#e8e8e8" stroke="none" /><rect x="172" y="37" width="15" height="9" rx="4" fill="#282828" stroke="none" />
          <rect x="150" y="58" width="42" height="17" rx="8" fill="#e8e8e8" stroke="none" /><rect x="178" y="61" width="10" height="10" rx="4" fill="#282828" stroke="none" /><Chev x={211} y={57} k={1.2} />
        </Ico></Box>
        <Box $w={110.4} $ml={127.5} $bg="#1d1d1d"><Ico box={[613, 25, 60, 60]}><Magnify x={627} y={33} /></Ico></Box>
        <Fill />
        <Box $w={19.6} $j="center"><Ico box={[1357, 25, 59, 60]}><Chev x={1386} y={57} k={1.2} /></Ico></Box>
      </PHeader>
      <PBody>
        <Nav>
          {navTabs.map(([y, art, gap], i) => (
            <React.Fragment key={y}>
              {gap ? <NavLine /> : null}
              <NavTab $on={i === 8} $mt={gap ? 8 : 0}><Ico box={[117, y - 39, 78, 78]}>{art}</Ico></NavTab>
            </React.Fragment>
          ))}
          <NavLine />
        </Nav>
        <Content>
          <Line>
            <Ico box={[220, 118, 78, 60]}><Brackets x={229} y={127} c="#a0a0a0" f="#f0f0f0" /></Ico>
            <Text>Cylinder</Text><Fill />
            <Ico box={[1362, 118, 54, 60]} c="#8f8f8f"><path d="M1395 127L1409 140L1404 144L1400 143L1392 151L1393 160L1390 163L1374 148L1378 145L1386 145L1393 137L1392 131ZM1382 156L1369 168" strokeWidth="1.2" /></Ico>
          </Line>
          <Box $w={399}>
            <Text $ml={8}>Add Modifier</Text><Fill /><Ico box={[1383, 225, 32, 60]}><Chev x={1396} y={258} k={1.2} /></Ico>
          </Box>
        </Content>
      </PBody>
    </Props>
  );
}

/* ---------- status bar ---------- */
const Status = styled.div`
  height: 19px; margin-top: 2px; background: #1d1d1d; display: flex; align-items: center; padding: 0 8.3px 0 11px; flex: none;
`;
const SText = styled(Text)`padding-top: 1px; color: #989898;`;
const Bottom = styled.div`
  height: 1px; flex: none;
  background: linear-gradient(90deg, #15122b 48px, #ddd6da 48px, #ddd6da 392px, #15122b 392px, #15122b 540px, #3a3a4a 540px, #3a3a4a 588px, #15122b 588px);
`;
const Mouse = ({ k }) => (
  <Ico box={[27, 84, 30, 54]} sx={NX} c="#8a8a8a">
    <rect x="29" y="91" width="26" height="43" rx="8" ry="10" />
    {k === 0 ? <path d="M29 110V98C30 92 34 91 42 91V110Z" fill="#a0a0a0" stroke="none" /> : null}
    {k === 1 ? <rect x="38" y="98" width="7" height="14" fill="#c0c0c0" stroke="none" /> : null}
    {k === 2 ? <path d="M55 110V98C54 92 50 91 42 91V110Z" fill="#a0a0a0" stroke="none" /> : null}
  </Ico>
);

export default function App() {
  return (
    <Page>
      <Global />
      <TopBarView />
      <Main>
        <ViewportView />
        <Side><OutlinerView /><PropertiesView /></Side>
      </Main>
      <Status>
        <Mouse k={0} /><SText $ml={10.5} $w={188}>Select</SText>
        <Mouse k={1} /><SText $ml={10.5} $w={188.3}>Rotate View</SText>
        <Mouse k={2} /><SText $ml={10.5}>Call Menu</SText>
        <Fill />
        <SText $ls={-0.43}>Cylinder | Verts:4/48 | Edges:4/88 | Faces:1/42 | Tris:92 | Objects:1/6 | Memory: 42.7 MiB | 3.2.2</SText>
      </Status>
      <Bottom />
    </Page>
  );
}
